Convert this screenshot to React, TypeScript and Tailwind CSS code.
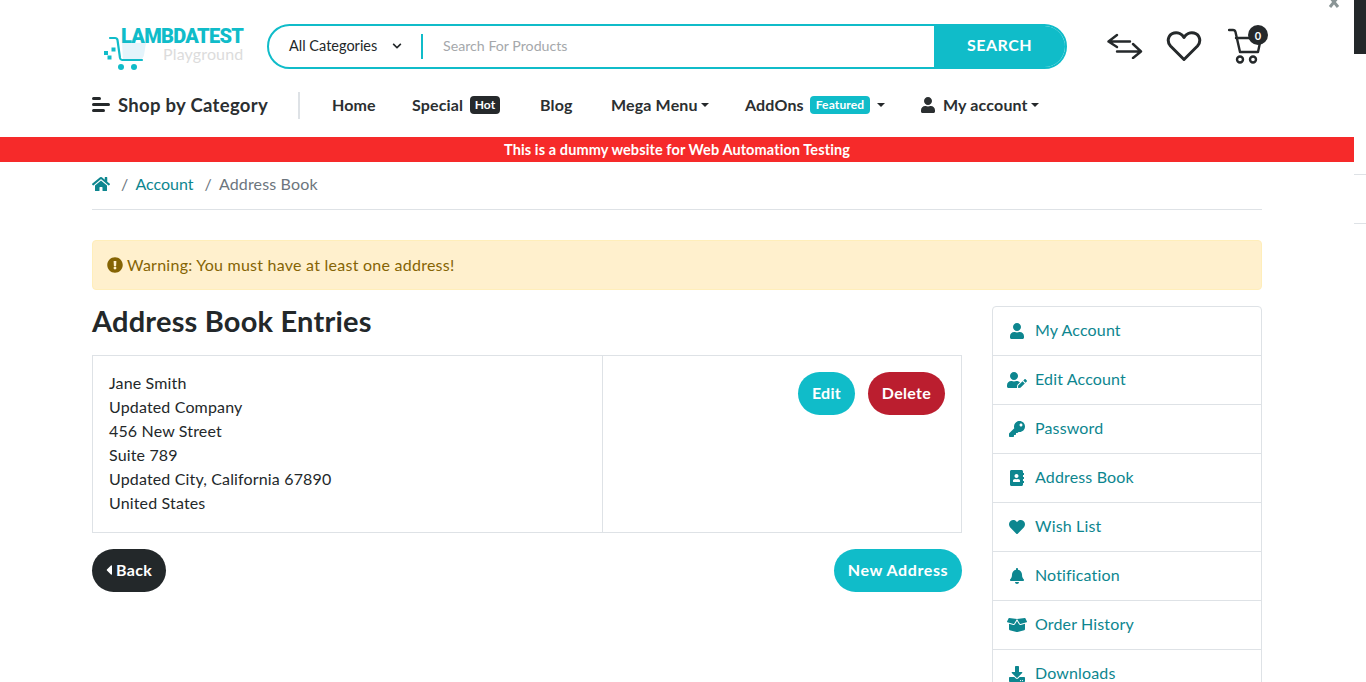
import React from 'react';
import {
  FaHome, FaUser, FaUserEdit, FaKey, FaAddressBook, FaHeart, FaBell, FaBoxOpen, FaDownload,
  FaExclamationCircle, FaCaretLeft, FaChevronDown,
} from 'react-icons/fa';

const SIDE_LINKS = [
  { label: 'My Account', icon: FaUser, size: 16 },
  { label: 'Edit Account', icon: FaUserEdit, size: 20 },
  { label: 'Password', icon: FaKey, size: 16 },
  { label: 'Address Book', icon: FaAddressBook, size: 16 },
  { label: 'Wish List', icon: FaHeart, size: 16 },
  { label: 'Notification', icon: FaBell, size: 16 },
  { label: 'Order History', icon: FaBoxOpen, size: 20 },
  { label: 'Downloads', icon: FaDownload, size: 16 },
];

const ADDRESS = ['Jane Smith', 'Updated Company', '456 New Street', 'Suite 789', 'Updated City, California 67890', 'United States'];

const Logo = () => (
  <div className="relative h-[46px] w-[140px] shrink-0">
    <svg width="44" height="44" viewBox="0 0 44 44" className="absolute left-0 top-[4px]">
      <path d="M20 16 H44 L42 28 Q41 33 36 33 H21 Z" fill="#e4f4fb" />
      <path d="M8 11 H13 Q15 11 15.5 13 L18 31 Q18.5 33 20 33 H40" fill="none" stroke="#10bcc9" strokeWidth="2.2" strokeLinecap="round" />
      <circle cx="19" cy="40" r="3" fill="#10bcc9" />
      <circle cx="32" cy="40" r="3" fill="#10bcc9" />
      <rect x="9.5" y="20.5" width="4" height="4" fill="#10bcc9" />
      <rect x="2" y="24" width="4" height="4" fill="#10bcc9" />
      <rect x="5.5" y="28.5" width="4" height="4" fill="#10bcc9" />
    </svg>
    <span className="absolute left-[19px] top-[4px] font-['Roboto',sans-serif] text-[20px] leading-[18px] font-black tracking-[-0.7px] whitespace-nowrap text-[#10bcc9]">LAMBDATEST</span>
    <span className="absolute left-[61px] top-[22px] text-[16px] leading-[18px] whitespace-nowrap text-[#dcdcdc]">Playground</span>
  </div>
);

const Caret = () => <span className="ml-[4px] inline-block h-0 w-0 shrink-0 border-x-[4.5px] border-t-[4.5px] border-x-transparent border-t-[#25292b]" />;

const App: React.FC = () => {
  return (
    <div className="relative flex h-[682px] w-[1366px] overflow-hidden bg-white font-['Lato','Noto_Sans',sans-serif] text-[16px] tracking-[0.15px] text-[#23282a]">
      <div className="w-[1354px] shrink-0">
        <header className="mx-auto w-[1170px]">
          <div className="flex h-[92px] items-center">
            <div className="ml-[10px] mr-[25px] shrink-0"><Logo /></div>
            <div className="flex h-[45px] w-[800px] shrink-0 overflow-hidden rounded-full border-2 border-[#10bcc9]">
              <div className="flex w-[152px] items-center justify-between pl-[20px] pr-[19px] text-[14.5px] tracking-normal">
                <span>All Categories</span>
                <FaChevronDown size={10} />
              </div>
              <div className="my-auto h-[25px] w-[2px] bg-[#10bcc9]" />
              <div className="flex flex-1 items-center pb-[1px] pl-[20px] text-[14.2px] tracking-normal text-[#a5a8ab]">Search For Products</div>
              <div className="flex w-[131px] items-center justify-center bg-[#10bcc9] pb-[2px] text-[16px] font-bold tracking-[0.5px] text-white">SEARCH</div>
            </div>
            <svg width="36" height="26" viewBox="0 0 36 26" className="ml-[40px] shrink-0" fill="none" stroke="#25292b" strokeWidth="2.4" strokeLinecap="round" strokeLinejoin="round">
              <path d="M10 2 L1.5 8.5 L10 14 M1.5 8.5 H23" />
              <path d="M26 11 L34 18.5 L26 25 M10 18.5 H34" />
            </svg>
            <svg width="36" height="32" viewBox="0 0 36 32" className="ml-[23px] shrink-0" fill="none" stroke="#25292b" strokeWidth="3" strokeLinejoin="round">
              <path d="M18 29.5 L4.5 16 C0.5 11.5 2 4.5 8 3 C12 2 16 4 18 7.5 C20 4 24 2 28 3 C34 4.5 35.5 11.5 31.5 16 Z" />
            </svg>
            <div className="relative ml-[26px] h-[38px] w-[36px] shrink-0">
              <svg width="36" height="38" viewBox="0 0 36 38" className="absolute left-0 top-0" fill="none" stroke="#25292b" strokeWidth="2.4" strokeLinecap="round" strokeLinejoin="round">
                <path d="M1 3 H5 Q7 3 7.5 5 L12 25 H30 L33 11 H8" />
                <circle cx="12" cy="32.5" r="3" />
                <circle cx="25" cy="32.5" r="3" />
              </svg>
              <span className="absolute left-[20px] top-[-2px] flex h-[20px] w-[20px] items-center justify-center rounded-full bg-[#25292b] text-[11px] font-bold leading-none text-white">0</span>
            </div>
          </div>
          <nav className="flex h-[45px] items-center pb-[19px] font-bold text-[#2b2f31]">
            <svg width="18" height="16" viewBox="0 0 18 16" fill="#25292b" className="mr-[8px]">
              <rect x="0" y="0" width="9" height="3" rx="1.5" />
              <rect x="0" y="6" width="18" height="3" rx="1.5" />
              <rect x="0" y="12" width="13" height="3" rx="1.5" />
            </svg>
            <span className="mt-[1px] w-[150px] text-[18.5px] tracking-[0.3px] whitespace-nowrap">Shop by Category</span>
            <span className="ml-[30px] h-[27px] w-[2px] bg-[#dee2e6]" />
            <span className="ml-[32px] w-[44px]">Home</span>
            <span className="ml-[36px] w-[54px]">Special</span>
            <span className="ml-[4px] flex h-[18px] w-[30px] items-center justify-center rounded-[4px] bg-[#25292b] text-[12px] text-white">Hot</span>
            <span className="ml-[40px] w-[35px]">Blog</span>
            <span className="ml-[36px] w-[86px] whitespace-nowrap">Mega Menu</span>
            <Caret />
            <span className="ml-[36px] w-[61px]">AddOns</span>
            <span className="ml-[4px] flex h-[18px] w-[60px] items-center justify-center rounded-[4px] bg-[#10bcc9] text-[12px] text-white">Featured</span>
            <span className="ml-[3px] flex items-center"><Caret /></span>
            <span className="ml-[35px] mr-[7px]"><FaUser size={16} /></span>
            <span className="w-[84px] whitespace-nowrap">My account</span>
            <Caret />
          </nav>
        </header>
        <div className="flex h-[25px] items-center justify-center bg-[#f62a2a] text-[14.5px] font-bold tracking-[0.1px] text-white">This is a dummy website for Web Automation Testing</div>
        <main className="mx-auto w-[1170px]">
          <div className="flex h-[48px] items-center border-b border-[#dee2e6] pb-[3px]">
            <FaHome size={18} className="text-[#0d868f]" />
            <span className="ml-[11px] text-[#6c757d]">/</span>
            <span className="ml-[7px] tracking-normal text-[#0d868f]">Account</span>
            <span className="ml-[11px] text-[#6c757d]">/</span>
            <span className="ml-[7px] text-[#6c757d]">Address Book</span>
          </div>
          <div className="mt-[30px] flex h-[50px] items-center gap-[4px] rounded-[4px] border border-[#ffeeba] bg-[#fff0cd] pl-[14px] text-[#856404]">
            <FaExclamationCircle size={16} />
            <span className="pb-[1px] tracking-[0.25px]">Warning: You must have at least one address!</span>
          </div>
          <div className="mt-[16px] flex items-start gap-[30px]">
            <div className="w-[870px]">
              <h1 className="flex h-[49px] items-center pb-[20px] text-[29px] font-bold tracking-[0.2px]">Address Book Entries</h1>
              <div className="flex h-[178px] border border-[#dee2e6]">
                <div className="w-[510px] border-r border-[#dee2e6] pl-[16px] pt-[15px] leading-[24px]">
                  {ADDRESS.map((line) => <div key={line}>{line}</div>)}
                </div>
                <div className="flex flex-1 items-start justify-end gap-[13px] pr-[16px] pt-[16px] font-bold tracking-[0.3px] text-white">
                  <span className="flex h-[43px] w-[57px] items-center justify-center rounded-full bg-[#10bcc9] pb-[2px]">Edit</span>
                  <span className="flex h-[43px] w-[77px] items-center justify-center rounded-full bg-[#bb1e2f] pb-[2px]">Delete</span>
                </div>
              </div>
              <div className="mt-[16px] flex justify-between font-bold tracking-[0.3px] text-white">
                <span className="flex h-[43px] w-[74px] items-center rounded-full bg-[#23282a] pb-[2px] pl-[9px]"><FaCaretLeft size={16} /><span className="-ml-[1px]">Back</span></span>
                <span className="flex h-[43px] w-[128px] items-center justify-center rounded-full bg-[#10bcc9] pb-[2px] tracking-[0.6px]">New Address</span>
              </div>
            </div>
            <aside className="w-[270px] shrink-0 rounded-t-[4px] border border-[#dee2e6] text-[#0d868f]">
              {SIDE_LINKS.map(({ label, icon: Icon, size }, i) => (
                <div key={label} className={`flex items-center ${i > 0 ? 'h-[49px] border-t border-[#dee2e6]' : 'h-[48px]'}`}>
                  <span className="flex w-[48px] items-center justify-center"><Icon size={size} /></span>
                  <span className="-ml-[6px] pb-[2px]">{label}</span>
                </div>
              ))}
            </aside>
          </div>
        </main>
      </div>
      <div className="w-[12px] shrink-0">
        <div className="h-[54px] bg-[#23282a]" />
        <div className="mt-[120px] h-[1px] bg-[#dee2e6]" />
        <div className="mt-[48px] h-[1px] bg-[#dee2e6]" />
      </div>
      <span className="absolute left-[1328px] top-[-5px] text-[#8a9596]"><svg width="12" height="14" viewBox="0 0 12 14" stroke="currentColor" strokeWidth="3"><path d="M2 2 L10 12 M10 2 L2 12" /></svg></span>
    </div>
  );
};

export default App;
